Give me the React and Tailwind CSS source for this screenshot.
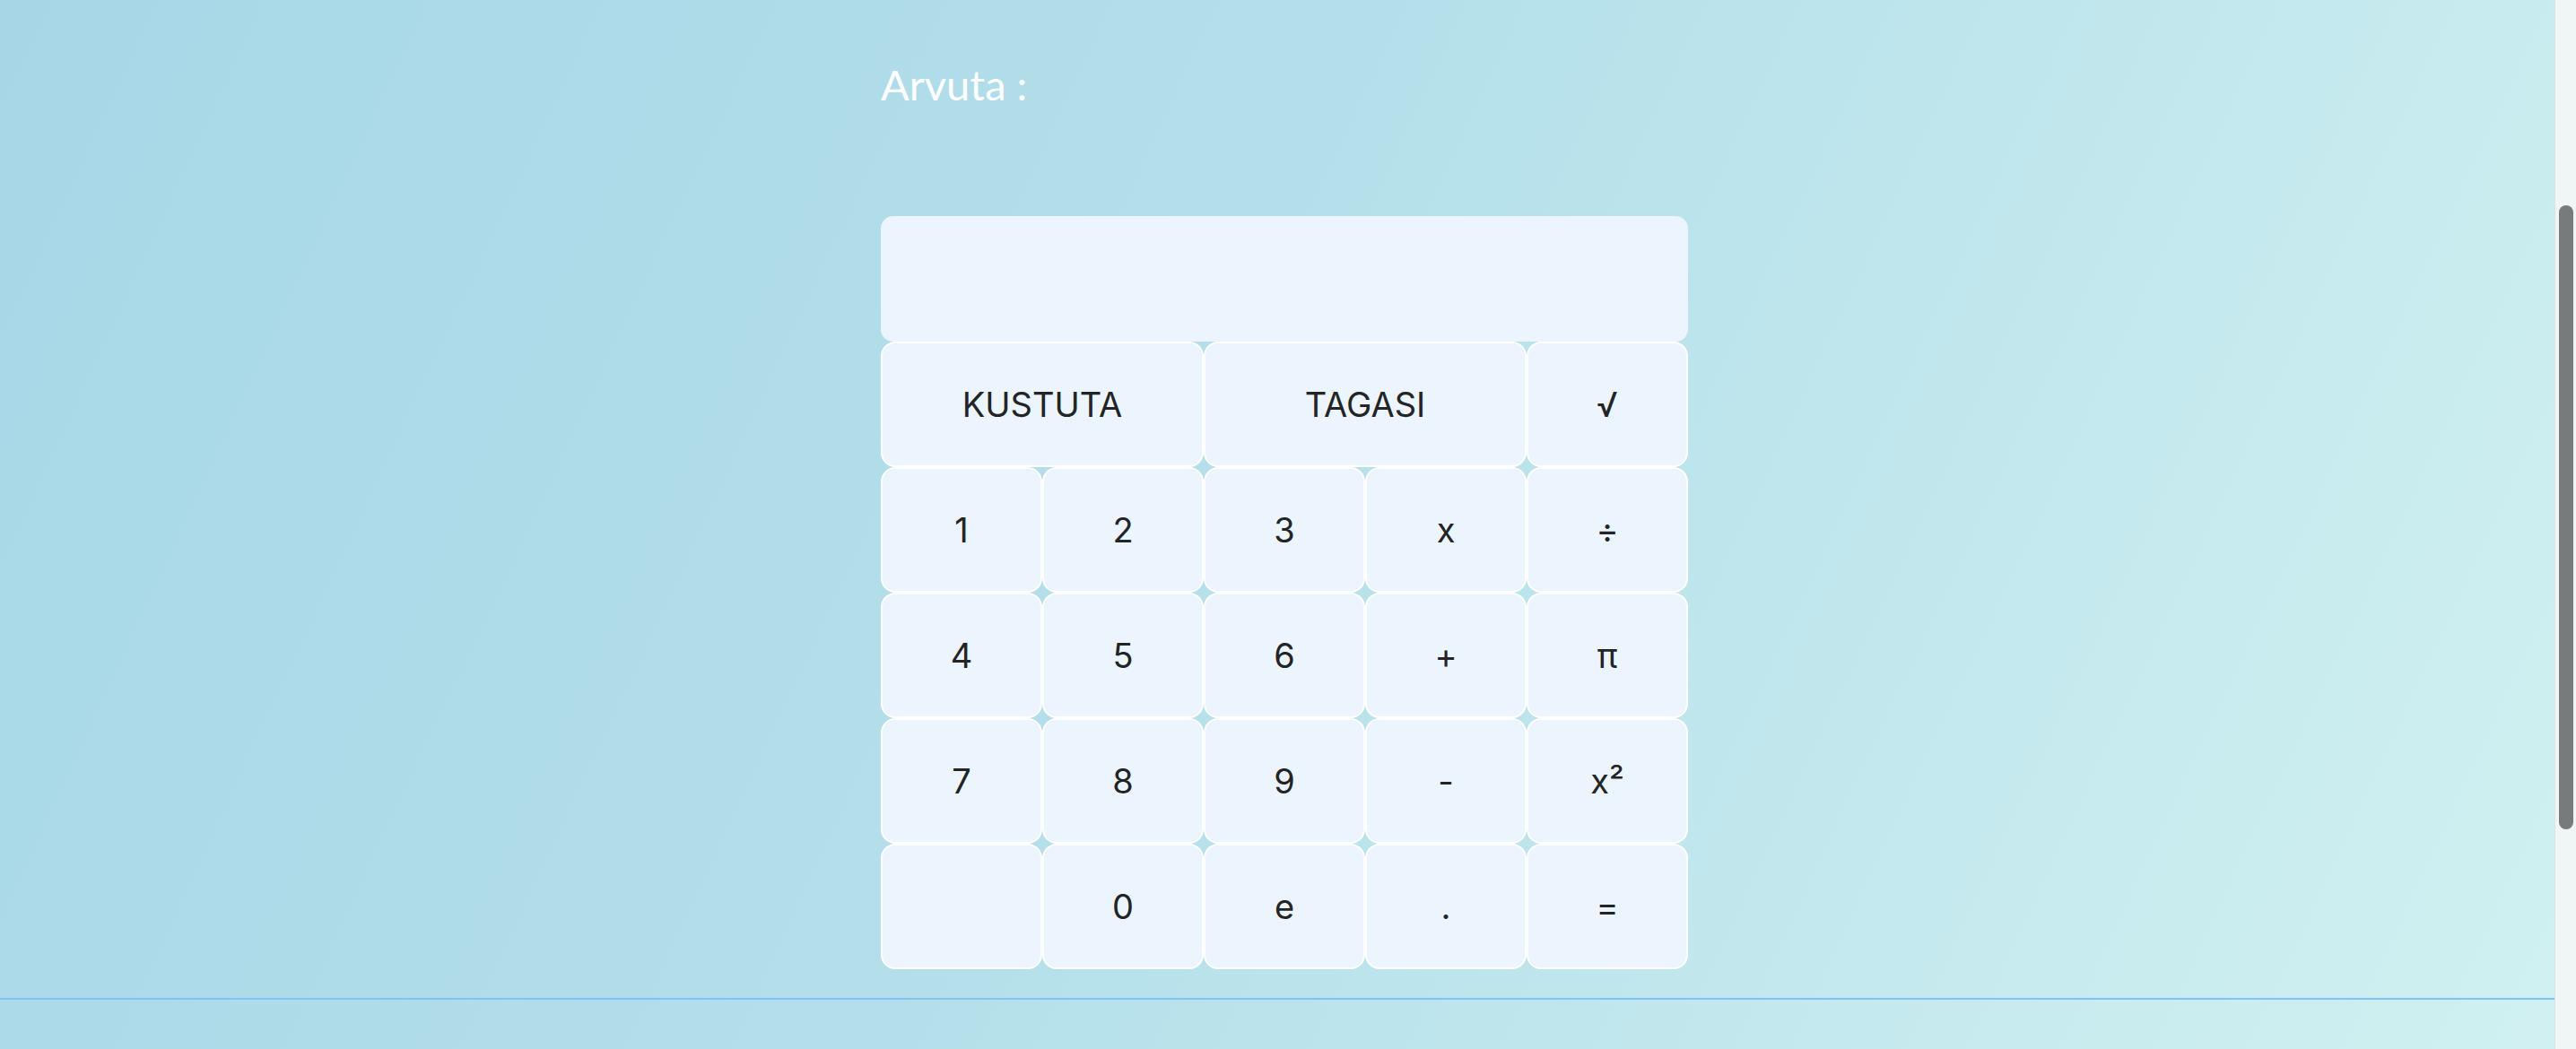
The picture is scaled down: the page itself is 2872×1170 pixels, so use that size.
import React from "react";

const rows = [
  [
    { t: "KUSTUTA", span: 2 },
    { t: "TAGASI", span: 2 },
    { t: "√" },
  ],
  [{ t: "1" }, { t: "2" }, { t: "3" }, { t: "x" }, { t: "÷" }],
  [{ t: "4" }, { t: "5" }, { t: "6" }, { t: "+" }, { t: "π" }],
  [{ t: "7" }, { t: "8" }, { t: "9" }, { t: "-" }, { t: "x²" }],
  [{ t: "" }, { t: "0" }, { t: "e" }, { t: "." }, { t: "=" }],
];

export default function App() {
  return (
    <div className="relative flex h-[1170px] w-full overflow-hidden bg-[linear-gradient(115deg,#a7d7e7_0%,#b4dfea_45%,#d1f1f1_100%)]">
      <div className="flex flex-1 flex-col">
        <div className="pl-[16px]">
          <div className="mx-auto w-[900px] pt-[71px]">
            <h1 className="font-['Lato',sans-serif] text-[47px] font-normal leading-none text-white">
              Arvuta&nbsp;:
            </h1>
            <div className="mt-[123px]">
              <div className="h-[140px] rounded-[14px] bg-[#ecf4fe]" />
              <div className="grid grid-cols-5">
                {rows.flat().map((b, i) => (
                  <button
                    key={i}
                    className={
                      "flex h-[140px] items-center justify-center rounded-[16px] border-2 border-white bg-[#ecf4fe] font-['Inter',sans-serif] text-[38px] text-[#222426] " +
                      (b.span === 2 ? "col-span-2" : "")
                    }
                  >
                    {b.t}
                  </button>
                ))}
              </div>
            </div>
          </div>
        </div>
        <div className="mt-[32px] h-[2px] w-full bg-[#7fc3fa]" />
      </div>
      <div className="relative h-full w-[24px] border-l border-[#dde3e5] bg-[#f0f5f6]">
        <div className="absolute left-[4px] top-[229px] h-[696px] w-[16px] rounded-full bg-[#777b7c]" />
      </div>
    </div>
  );
}
